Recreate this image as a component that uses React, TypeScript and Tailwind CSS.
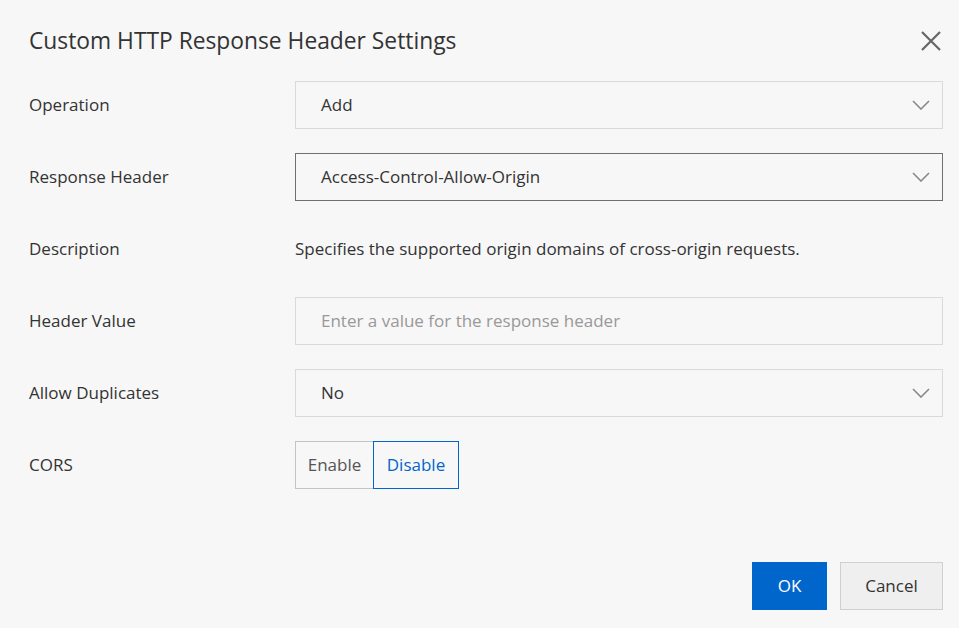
import React from 'react';

const Chevron = () => (
  <svg width="18" height="10" viewBox="0 0 18 10" fill="none" className="shrink-0">
    <path d="M1 1 L9 9 L17 1" stroke="#888888" strokeWidth="1.6" />
  </svg>
);

const Select = ({ value, active }: { value: string; active?: boolean }) => (
  <div
    className={`flex h-12 flex-1 items-center justify-between border pl-[25px] pr-[12px] text-[17px] text-[#333333] ${
      active ? 'border-[#707070]' : 'border-[#d9d9d9]'
    }`}
  >
    <span>{value}</span>
    <Chevron />
  </div>
);

const Row = ({ label, children }: { label: string; children: React.ReactNode }) => (
  <div className="flex h-12 items-center">
    <div className="w-[266px] shrink-0 text-[17px] text-[#333333]">{label}</div>
    {children}
  </div>
);

export default function App() {
  return (
    <div
      className="flex h-[628px] w-[959px] flex-col bg-[#f7f7f7] pl-[29px] pr-[16px]"
      style={{ fontFamily: '"Open Sans", "Noto Sans", sans-serif' }}
    >
      {/* Header */}
      <div className="flex h-[81px] items-start justify-between pt-[25px]">
        <h1 className="text-[22.8px] leading-[32px] text-[#333333]">Custom HTTP Response Header Settings</h1>
        <svg width="22" height="22" viewBox="0 0 22 22" className="mt-[5px] mr-[1px]">
          <path d="M2 2 L20 20 M20 2 L2 20" stroke="#666666" strokeWidth="2.2" />
        </svg>
      </div>

      {/* Form */}
      <div className="flex flex-col gap-6">
        <Row label="Operation">
          <Select value="Add" />
        </Row>
        <Row label="Response Header">
          <Select value="Access-Control-Allow-Origin" active />
        </Row>
        <Row label="Description">
          <div className="text-[17px] text-[#333333]">Specifies the supported origin domains of cross-origin requests.</div>
        </Row>
        <Row label="Header Value">
          <div className="flex h-12 flex-1 items-center border border-[#d9d9d9] pl-[25px] text-[17px] text-[#999999]">
            Enter a value for the response header
          </div>
        </Row>
        <Row label="Allow Duplicates">
          <Select value="No" />
        </Row>
        <Row label="CORS">
          <div className="flex h-12">
            <div className="flex w-[78px] items-center justify-center border border-r-0 border-[#c4c4c4] text-[17px] text-[#555555]">
              Enable
            </div>
            <div className="flex w-[86px] items-center justify-center border border-[#0066cc] text-[17px] text-[#0066cc]">
              Disable
            </div>
          </div>
        </Row>
      </div>

      {/* Footer */}
      <div className="mt-auto mb-[18px] flex justify-end gap-[13px]">
        <button className="flex h-12 w-[75px] items-center justify-center bg-[#0066cc] text-[17px] text-white">
          OK
        </button>
        <button className="flex h-12 w-[103px] items-center justify-center border border-[#d0d0d0] bg-[#efefef] text-[17px] text-[#333333]">
          Cancel
        </button>
      </div>
    </div>
  );
}
